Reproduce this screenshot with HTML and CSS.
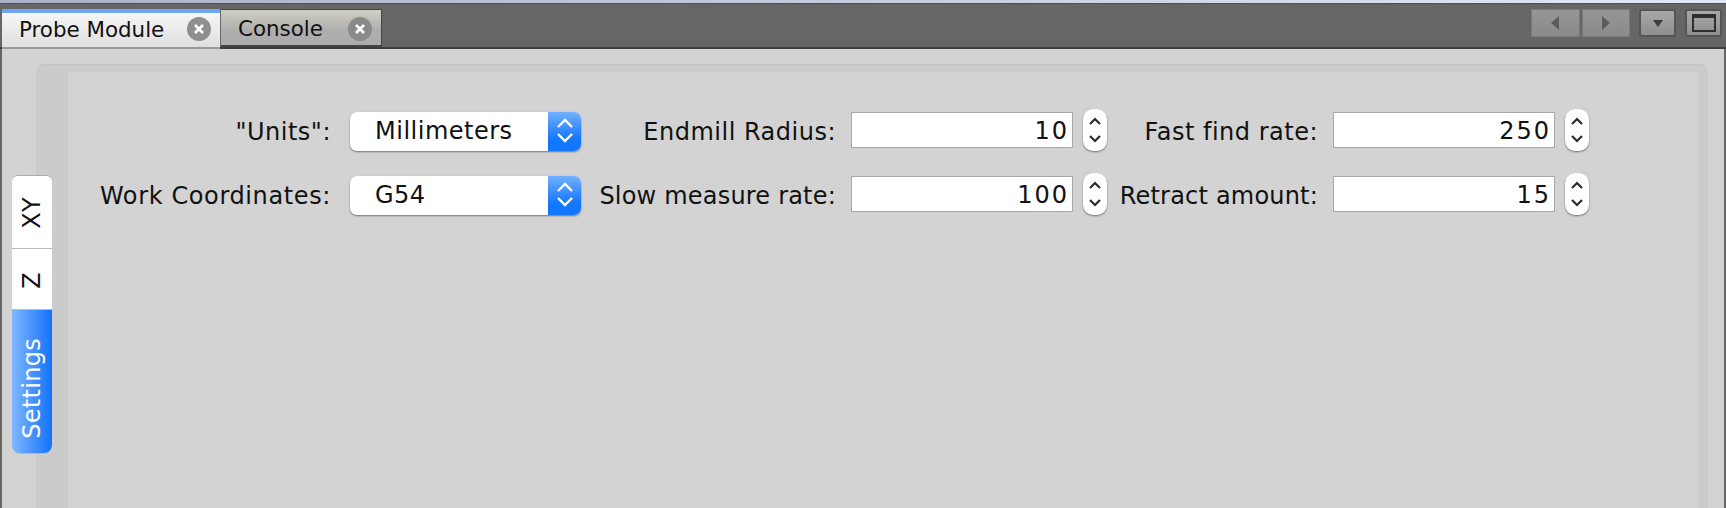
FILE: index.html
```html
<!DOCTYPE html>
<html lang="en">
<head>
  <meta charset="UTF-8">
  <title>Probe Module</title>
  <link rel="stylesheet" href="styles.css">
</head>
<body>

<div class="window">
  <!-- Tab bar -->
  <div class="tabbar">
    <div class="tab active">
      <span class="tab-title">Probe Module</span>
      <svg class="tab-close" viewBox="0 0 24 24"><circle cx="12" cy="12" r="12" fill="#8f8f8f"/><path d="M8 8l8 8M16 8l-8 8" stroke="#fff" stroke-width="2.6"/></svg>
    </div>
    <div class="tab">
      <span class="tab-title">Console</span>
      <svg class="tab-close" viewBox="0 0 24 24"><circle cx="12" cy="12" r="12" fill="#8a8a8a"/><path d="M8 8l8 8M16 8l-8 8" stroke="#fff" stroke-width="2.6"/></svg>
    </div>
    <div class="bar-tools">
      <div class="nav-group">
        <button class="nav-btn"><svg width="8" height="14" viewBox="0 0 8 14"><path d="M8 0v14L0 7z" fill="#5c5c5c"/></svg></button>
        <button class="nav-btn"><svg width="8" height="14" viewBox="0 0 8 14"><path d="M0 0v14l8-7z" fill="#5c5c5c"/></svg></button>
      </div>
      <button class="tool-btn"><svg width="10" height="7" viewBox="0 0 10 7"><path d="M0 0h10L5 7z" fill="#3c3c3c"/></svg></button>
      <button class="tool-btn"><span class="max-icon"></span></button>
    </div>
  </div>

  <!-- Module content -->
  <div class="content">
    <div class="side-tabs">
      <div class="side-tab first"><span>XY</span></div>
      <div class="side-tab middle"><span>Z</span></div>
      <div class="side-tab last selected"><span>Settings</span></div>
    </div>
    <div class="panel">
      <div class="panel-inner">
        <div class="form">
          <label class="lbl lbl-1">"Units":</label>
          <div class="combo"><span class="combo-text">Millimeters</span><span class="combo-arrows"><svg width="18" height="28" viewBox="0 0 18 28"><path d="M2 9l7-7 7 7M2 16l7 7 7-7" fill="none" stroke="#fff" stroke-width="2.4"/></svg></span></div>
          <label class="lbl lbl-2">Endmill Radius:</label>
          <div class="field">10</div>
          <div class="spin-cell"><div class="spinner"><svg width="14" height="28" viewBox="0 0 14 28"><path d="M2 8l5-5 5 5M2 20l5 5 5-5" fill="none" stroke="#2b2b2b" stroke-width="2.2"/></svg></div></div>
          <label class="lbl lbl-2">Fast find rate:</label>
          <div class="field">250</div>
          <div class="spin-cell"><div class="spinner"><svg width="14" height="28" viewBox="0 0 14 28"><path d="M2 8l5-5 5 5M2 20l5 5 5-5" fill="none" stroke="#2b2b2b" stroke-width="2.2"/></svg></div></div>

          <label class="lbl lbl-1 wide">Work Coordinates:</label>
          <div class="combo"><span class="combo-text">G54</span><span class="combo-arrows"><svg width="18" height="28" viewBox="0 0 18 28"><path d="M2 9l7-7 7 7M2 16l7 7 7-7" fill="none" stroke="#fff" stroke-width="2.4"/></svg></span></div>
          <label class="lbl lbl-2 tight">Slow measure rate:</label>
          <div class="field">100</div>
          <div class="spin-cell"><div class="spinner"><svg width="14" height="28" viewBox="0 0 14 28"><path d="M2 8l5-5 5 5M2 20l5 5 5-5" fill="none" stroke="#2b2b2b" stroke-width="2.2"/></svg></div></div>
          <label class="lbl lbl-2 tight">Retract amount:</label>
          <div class="field">15</div>
          <div class="spin-cell"><div class="spinner"><svg width="14" height="28" viewBox="0 0 14 28"><path d="M2 8l5-5 5 5M2 20l5 5 5-5" fill="none" stroke="#2b2b2b" stroke-width="2.2"/></svg></div></div>
        </div>
      </div>
    </div>
  </div>
</div>

</body>
</html>
```

FILE: styles.css
```css
* { margin: 0; padding: 0; box-sizing: border-box; }

html, body {
  width: 100%;
  height: 100%;
  overflow: hidden;
  font-family: "DejaVu Sans", sans-serif;
  font-size: 24px;
  letter-spacing: 0.5px;
  color: #111;
  background: #d3d3d3;
}

.window {
  height: 100vh;
  display: flex;
  flex-direction: column;
  background: #666;
}

/* tab bar */
.tabbar {
  height: 49px;
  flex: none;
  display: flex;
  align-items: flex-start;
  padding: 9px 4px 0 2px;
  background: #666;
  border-bottom: 2px solid #3e3e3e;
  position: relative;
}

.tabbar::before {
  content: "";
  position: absolute;
  top: 0;
  left: 0;
  right: 0;
  height: 3px;
  background: linear-gradient(90deg, #a9b1c9, #e2e8f8);
  border-bottom: 1px solid #4f4f4f;
}

.tab {
  height: 38px;
  display: flex;
  align-items: center;
  border: 1px solid #444;
  border-left: none;
  border-bottom-width: 2px;
  background: linear-gradient(#d0d0c2, #adadad 60%);
  width: 161px;
  margin-left: 1px;
  padding: 2px 0 0 17px;
}

.tab.active {
  width: 218px;
  height: 40px;
  margin-left: 0;
  padding: 0 0 2px 17px;
  border: none;
  border-top: 4px solid #6ea6f2;
  border-bottom: 2px solid #9a9a9a;
  background: linear-gradient(#f6f6f6, #dfdfdf);
}

.tab-title {
  flex: 1;
  font-size: 21.4px;
  letter-spacing: 0;
  white-space: nowrap;
}

.tab-close {
  width: 24px;
  height: 24px;
  margin-right: 9px;
}

.bar-tools {
  margin-left: auto;
  display: flex;
  gap: 9px;
}

.nav-group {
  display: flex;
  gap: 2px;
  width: 99px;
  height: 28px;
}

.nav-btn {
  flex: 1;
  display: flex;
  align-items: center;
  justify-content: center;
  border: 1px solid #7a7a7a;
  background: linear-gradient(#969696, #8a8a8a);
}

.tool-btn {
  width: 37px;
  height: 28px;
  display: flex;
  align-items: center;
  justify-content: center;
  border: 2px solid #555;
  border-radius: 3px;
  background: linear-gradient(#a8a8a8, #8e8e8e);
}

.max-icon {
  width: 24px;
  height: 18px;
  border: 2px solid #2e2e2e;
  border-top-width: 4px;
}

/* content */
.content {
  flex: 1;
  min-height: 0;
  display: flex;
  align-items: stretch;
  margin: 0 2px;
  padding: 15px 16px 0 10px;
  background: #d3d3d3;
}

.side-tabs {
  flex: none;
  width: 40px;
  margin-top: 111px;
  align-self: flex-start;
  display: flex;
  flex-direction: column;
  gap: 1px;
  position: relative;
  z-index: 1;
}

.side-tab {
  display: flex;
  align-items: center;
  justify-content: center;
  padding-top: 2px;
  background: #fff;
  box-shadow: 0 1px 0 #bbb;
}

.side-tab span {
  writing-mode: vertical-rl;
  transform: rotate(180deg);
  letter-spacing: 0.3px;
  white-space: nowrap;
}

.side-tab.first {
  height: 73px;
  border-radius: 6px 6px 0 0;
  border-top: 1px solid #aaa;
}

.side-tab.middle { height: 60px; }

.side-tab.last {
  height: 143px;
  padding-top: 14px;
  border-radius: 0 0 8px 8px;
}

.side-tab.selected {
  background: linear-gradient(90deg, #7fb7ff, #1372fb);
  color: #fff;
}

.panel {
  flex: 1;
  margin-left: -16px;
  padding: 7px 10px 0 32px;
  display: flex;
  background: #cbcbcb;
  border-top: 1px solid #c3c3c3;
  border-radius: 8px 8px 0 0;
}

.panel-inner {
  flex: 1;
  padding-top: 37px;
  background: #d3d3d3;
}

/* form grid */
.form {
  display: grid;
  grid-template-columns: 282px 231px 270px 222px 34px 226px 222px 34px;
  grid-auto-rows: 42px;
  row-gap: 22px;
}

.lbl {
  align-self: center;
  text-align: right;
  white-space: nowrap;
  margin-top: 3px;
}

.lbl-1 { padding-right: 19px; }
.lbl-2 { padding-right: 15px; }

/* the reference's label widths don't scale evenly */
.wide { letter-spacing: 0.62px; }
.tight { letter-spacing: 0.2px; }

.combo {
  height: 39px;
  margin-top: 3px;
  display: flex;
  border-radius: 7px;
  background: #fff;
  box-shadow: 0 1px 2px rgba(0, 0, 0, 0.45);
  overflow: hidden;
}

.combo-text {
  flex: 1;
  padding-left: 25px;
  line-height: 38px;
}

.combo-arrows {
  width: 33px;
  display: flex;
  align-items: center;
  justify-content: center;
  background: linear-gradient(#72b0ff, #1277fb 70%);
}

.field {
  height: 36px;
  margin-top: 3px;
  padding-right: 3px;
  text-align: right;
  line-height: 36px;
  letter-spacing: 2px;
  background: #fff;
  border: 1px solid #a8a8a8;
}

.spin-cell { padding-left: 10px; }

.spinner {
  width: 24px;
  height: 42px;
  display: flex;
  align-items: center;
  justify-content: center;
  border-radius: 10px;
  background: #fff;
  box-shadow: 0 1px 2px rgba(0, 0, 0, 0.45);
}
```
